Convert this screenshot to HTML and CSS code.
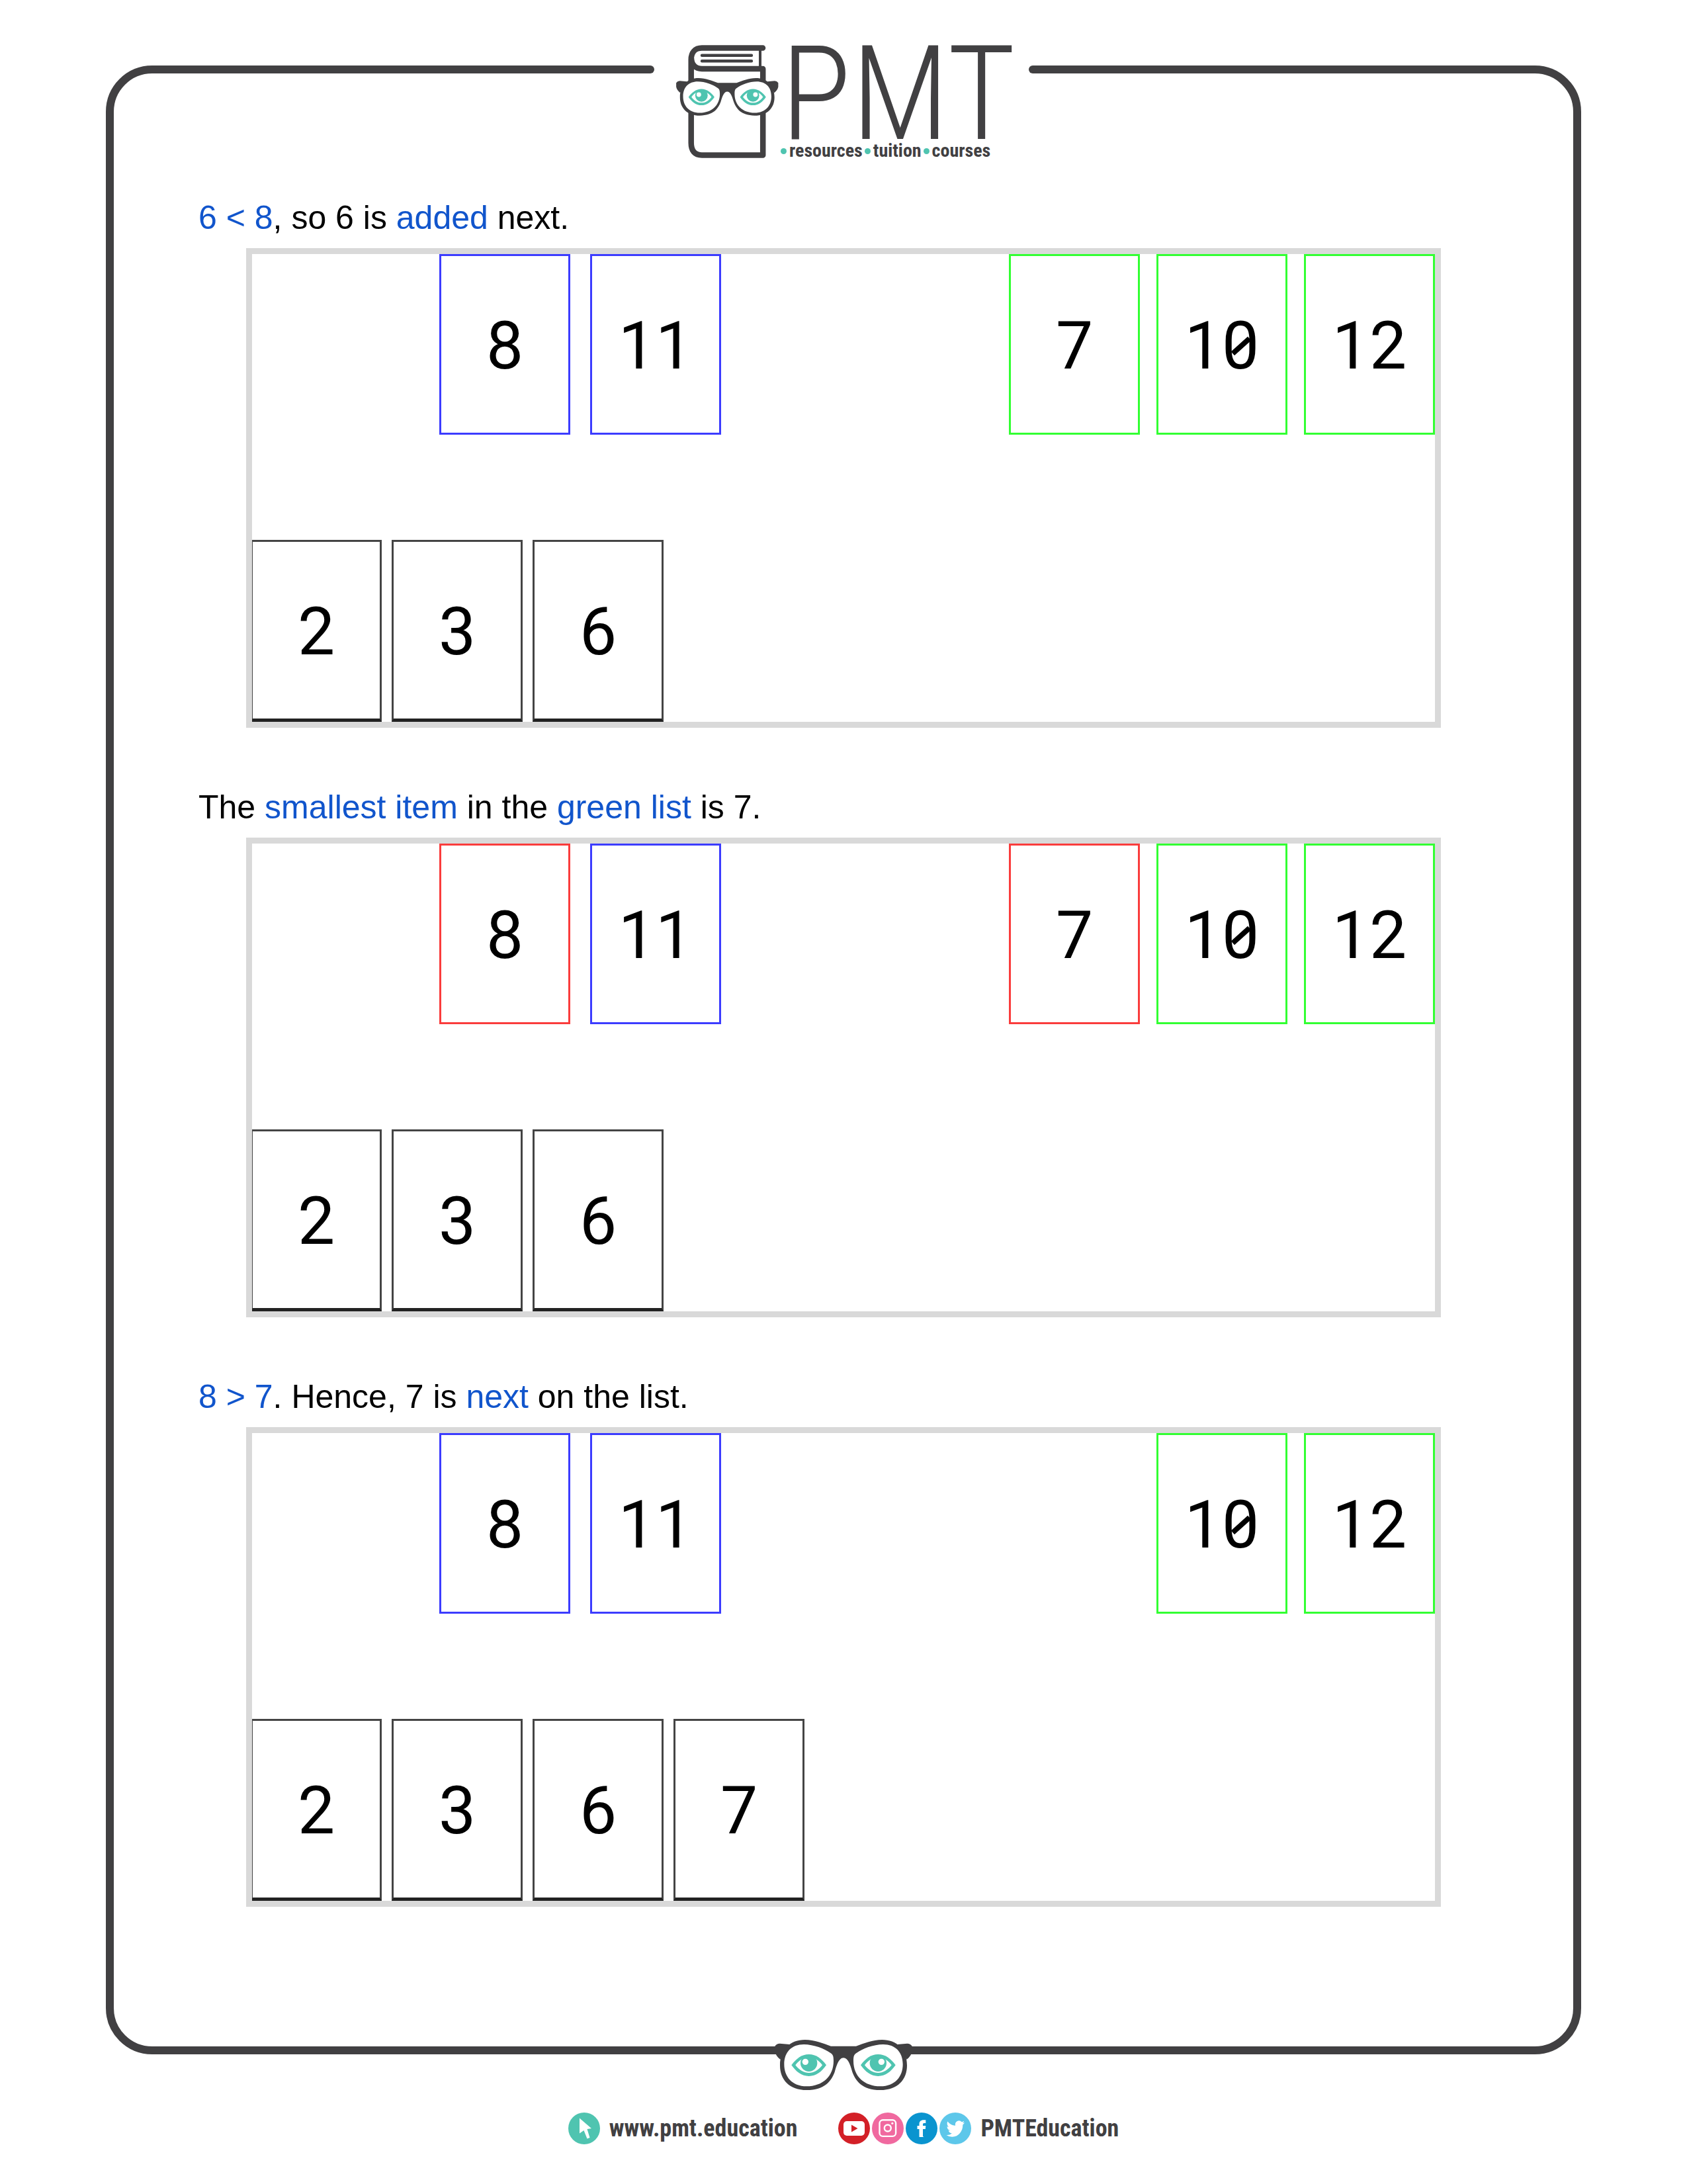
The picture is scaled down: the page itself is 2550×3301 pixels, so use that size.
FILE: index.html
```html
<!DOCTYPE html>
<html lang="en">
<head>
<meta charset="utf-8">
<title>Merge Sort – PMT Education</title>
<link rel="stylesheet" href="styles.css">
</head>
<body>
<svg class="defs" aria-hidden="true">
  <defs>
    <g id="eye">
      <path fill="#4fc4b0" d="M-79 0C-58-29-33-49 0-49S58-29 79 0C58 30 33 50 0 50S-58 30-79 0Z"/>
      <path fill="#fff" d="M-61 0C-44-24-23-35 0-35S44-24 61 0C44 23 22 35 0 35S-44 23-61 0Z"/>
      <circle fill="#4fc4b0" cy="-9" r="38"/>
    </g>
    <g id="glasses">
      <path fill="#414042" d="M94 98Q102 86 116 86L160 90L118 158Q98 142 94 122ZM716 98Q708 86 694 86L650 90L692 158Q712 142 716 122Z"/>
      <path fill="#414042" d="M117 185C117 110 165 69 230 69C275 69 310 85 348 98L462 98C500 85 535 69 580 69C645 69 693 110 693 185C693 250 650 297 572 297C490 297 460 255 445 215C435 180 425 151 405 151C385 151 375 180 365 215C350 255 320 297 238 297C160 297 117 250 117 185Z"/>
      <path fill="#fff" d="M136 180C136 125 170 90 225 90C270 90 320 110 345 128C358 135 360 145 360 165C360 235 310 280 238 280C170 280 136 235 136 180ZM674 180C674 125 640 90 585 90C540 90 490 110 465 128C452 135 450 145 450 165C450 235 500 280 572 280C640 280 674 235 674 180Z"/>
      <use href="#eye" x="248" y="184"/>
      <use href="#eye" x="562" y="184"/>
      <circle fill="#fff" cx="232" cy="169" r="14"/>
      <circle fill="#fff" cx="577" cy="169" r="14"/>
    </g>
  </defs>
</svg>

<header class="brand">
  <svg class="book" viewBox="1016 60 168 184" role="img" aria-label="Book wearing glasses">
    <g fill="none" stroke="#414042" stroke-width="8.5" stroke-linecap="round">
      <path d="M1153 72.5H1061C1050 72.5 1044.700 80 1044.700 90V216C1044.700 228 1050 234.500 1061 234.500H1153.200V104H1061C1051 104 1045 97 1045 88" stroke-linejoin="round"/>
      <path d="M1149 76V100" stroke-width="4" stroke-linecap="butt"/>
      <path d="M1061 83.700H1136M1061 92.300H1136" stroke-width="4.400"/>
    </g>
    <use href="#glasses" transform="translate(998.800 101) scale(.248)"/>
  </svg>
  <div class="wordmark">
    <h1 class="name">PMT</h1>
    <p class="tagline"><span>resources</span><span>tuition</span><span>courses</span></p>
  </div>
</header>

<main class="frame">
  <section class="step">
    <p class="caption"><em>6 &lt; 8</em>, so 6 is <em>added</em> next.</p>
    <div class="figure">
      <div class="row">
        <div class="cards left"><span class="card blue">8</span><span class="card blue">11</span></div>
        <div class="cards right"><span class="card green">7</span><span class="card green">1<span class="zero">0</span></span><span class="card green">12</span></div>
      </div>
      <div class="cards merged"><span class="card">2</span><span class="card">3</span><span class="card">6</span></div>
    </div>
  </section>
  <section class="step">
    <p class="caption">The <em>smallest item</em> in the <em>green list</em> is 7.</p>
    <div class="figure">
      <div class="row">
        <div class="cards left"><span class="card red">8</span><span class="card blue">11</span></div>
        <div class="cards right"><span class="card red">7</span><span class="card green">1<span class="zero">0</span></span><span class="card green">12</span></div>
      </div>
      <div class="cards merged"><span class="card">2</span><span class="card">3</span><span class="card">6</span></div>
    </div>
  </section>
  <section class="step">
    <p class="caption"><em>8 &gt; 7</em>. Hence, 7 is <em>next</em> on the list.</p>
    <div class="figure">
      <div class="row">
        <div class="cards left"><span class="card blue">8</span><span class="card blue">11</span></div>
        <div class="cards right"><span class="card green">1<span class="zero">0</span></span><span class="card green">12</span></div>
      </div>
      <div class="cards merged"><span class="card">2</span><span class="card">3</span><span class="card">6</span><span class="card">7</span></div>
    </div>
  </section>
</main>

<footer class="footer">
  <svg class="specs" viewBox="90 60 630 246" aria-hidden="true"><use href="#glasses"/></svg>
  <div class="links">
    <a class="site" href="https://www.pmt.education">
      <svg class="icon" viewBox="0 0 48 48" aria-hidden="true"><circle cx="24" cy="24" r="24" fill="#4fc4b0"/><path fill="#fff" d="M17 8.500L35 24L28.500 25L32.500 38L28.500 39.500L23.500 27L17 31.500Z"/></svg>
      www.pmt.education
    </a>
    <div class="social">
      <a href="#youtube" aria-label="YouTube"><svg class="icon" viewBox="0 0 48 48"><circle cx="24" cy="24" r="24" fill="#d32027"/><rect x="8" y="13" width="32" height="22" rx="5" fill="#fff"/><path fill="#d32027" d="M20 18.500L29.500 24L20 29.500Z"/></svg></a>
      <a href="#instagram" aria-label="Instagram"><svg class="icon" viewBox="0 0 48 48"><circle cx="24" cy="24" r="24" fill="#f0699f"/><g fill="none" stroke="#fff" stroke-width="2.400"><rect x="11.500" y="11.300" width="24.600" height="24.600" rx="5"/><circle cx="23.800" cy="23.500" r="5"/></g><circle cx="30.800" cy="16.300" r="1.600" fill="#fff"/></svg></a>
      <a href="#facebook" aria-label="Facebook"><svg class="icon" viewBox="0 0 48 48"><circle cx="24" cy="24" r="24" fill="#0a94cf"/><path fill="#fff" d="M20.500 37V25H17.500V20H20.500V17.500C20.500 13.500 23 11.300 27 11.300H30.300V16H28C26.300 16 26 16.700 26 18V20H30.300L29.800 25H26V36L27.500 37Z"/></svg></a>
      <a href="#twitter" aria-label="Twitter"><svg class="icon" viewBox="0 0 48 48"><circle cx="24" cy="24" r="24" fill="#5dc7ea"/><path fill="#fff" transform="translate(10.500 9.500) scale(1.150 1.250)" d="M23.953 4.570a10 10 0 01-2.825.775 4.958 4.958 0 002.163-2.723c-.951.555-2.005.959-3.127 1.184a4.920 4.920 0 00-8.384 4.482C7.690 8.095 4.067 6.130 1.640 3.162a4.822 4.822 0 00-.666 2.475c0 1.710.870 3.213 2.188 4.096a4.904 4.904 0 01-2.228-.616v.060a4.923 4.923 0 003.946 4.827 4.996 4.996 0 01-2.212.085 4.936 4.936 0 004.604 3.417 9.867 9.867 0 01-6.102 2.105c-.390 0-.779-.023-1.170-.067a13.995 13.995 0 007.557 2.209c9.053 0 13.998-7.496 13.998-13.985 0-.210 0-.420-.015-.630A9.935 9.935 0 0024 4.590z"/></svg></a>
      <span class="handle">PMTEducation</span>
    </div>
  </div>
</footer>
</body>
</html>
```

FILE: styles.css
```css
* { box-sizing: border-box; }

body {
  margin: 0;
  padding: 60px 160px;
  background: #fff;
  color: #000;
  font-family: "Liberation Sans", Arial, sans-serif;
}

svg { display: block; }
.defs { position: absolute; width: 0; height: 0; }

.brand {
  position: relative;
  z-index: 1;
  display: flex;
  width: 584px;
  height: 190px;
  margin: 0 auto -151px;
  padding-left: 33px;
  background: #fff;
  color: #414042;
  font-family: "Roboto Condensed", "Liberation Sans Narrow", "Liberation Sans", sans-serif;
}

/* rounded ends of the frame line on either side of the logo */
.brand::before,
.brand::after {
  content: "";
  position: absolute;
  top: 39px;
  height: 12px;
  background: #414042;
}
.brand::before { left: 0; width: 6px; border-radius: 0 6px 6px 0; }
.brand::after { right: 0; width: 12px; border-radius: 6px 0 0 6px; }

.book { flex: none; width: 168px; height: 184px; }

.name {
  margin: 0 0 -10px -4px;
  font-size: 198px;
  font-weight: 300;
  line-height: 164px;
}

.tagline {
  display: flex;
  gap: 3px;
  margin: 0 0 0 -4px;
  font-size: 28px;
  font-weight: 700;
  line-height: 28px;
}
.tagline span { display: flex; align-items: center; gap: 4px; }
.tagline span::before {
  content: "";
  width: 9px;
  height: 9px;
  border-radius: 50%;
  background: #4fc4b0;
}

.frame {
  display: flex;
  flex-direction: column;
  gap: 90px;
  padding: 188px 128px 211px;
  border: 12px solid #414042;
  border-radius: 70px;
}

.caption { margin: 0 0 16px; font-size: 50px; line-height: 60px; }
.caption em { color: #1155cc; font-style: normal; }

.figure {
  display: flex;
  flex-direction: column;
  gap: 159px;
  margin: 0 72px;
  border: 9px solid #d9d9d9;
  overflow: hidden;
}

.row { display: flex; justify-content: space-between; }
.cards { display: flex; }
.left { gap: 30px; padding-left: 283px; }
.right { gap: 25px; }
.merged { gap: 15px; margin-left: -2px; }

.card {
  flex: none;
  width: 198px;
  height: 273px;
  border: 3px solid #444;
  font-family: Roboto, sans-serif;
  font-size: 100px;
  line-height: 271px;
  text-align: center;
}
.blue { border-color: #3c3cff; }
.green { border-color: #32ff32; }
.red { border-color: #fa3c3c; }
.merged .card { height: 275px; border-bottom: 5px solid #222; }

.zero { position: relative; }
.zero::after {
  content: "";
  position: absolute;
  top: 55px;
  left: 12px;
  width: 34px;
  height: 8px;
  background: #000;
  transform: rotate(-42deg);
}

.footer {
  display: flex;
  flex-direction: column;
  align-items: center;
  gap: 31px;
  margin-top: -25px;
  color: #414042;
  font-family: "Roboto Condensed", "Liberation Sans Narrow", "Liberation Sans", sans-serif;
  font-size: 36px;
  font-weight: 700;
  line-height: 48px;
}
.specs { position: relative; width: 210px; height: 82px; }
.links { display: flex; gap: 62px; }
.site { display: flex; gap: 14px; color: inherit; text-decoration: none; }
.social { display: flex; gap: 3px; }
.icon { width: 48px; height: 48px; }
.handle { margin-left: 11px; }
```
